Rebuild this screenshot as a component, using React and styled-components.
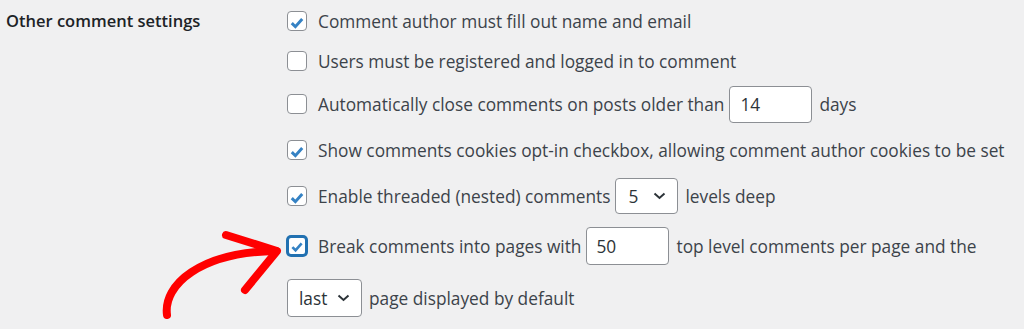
import styled, { createGlobalStyle } from "styled-components";

const GlobalStyle = createGlobalStyle`
  body {
    margin: 0;
    background: #f0f0f1;
    font-family: "Open Sans", "Noto Sans", sans-serif;
  }
`

const Page = styled.div`
  position: relative;
  display: flex;
  width: 1024px;
  height: 329px;
  overflow: hidden;
`

const Heading = styled.div`
  width: 287px;
  padding-left: 6px;
  box-sizing: border-box;
  font-size: 16.5px;
  font-weight: 600;
  color: #1d2327;
  line-height: 42px;
`

const Fieldset = styled.div`
  display: flex;
  flex-direction: column;
`

const Row = styled.div`
  display: flex;
  align-items: center;
  height: ${(props) => props.$h}px;
  font-size: 17.3px;
  color: #3c434a;
  white-space: nowrap;
`

const Box = styled.span`
  width: 20px;
  height: 20px;
  box-sizing: border-box;
  border: ${(props) => (props.$focus ? "2px solid #2271b1" : "1px solid #8c8f94")};
  box-shadow: ${(props) => (props.$focus ? "0 0 0 1px #2271b1" : "none")};
  border-radius: 4px;
  background: #fff;
  margin-right: 11px;
  flex-shrink: 0;
  display: flex;
  align-items: center;
  justify-content: center;
`

const Field = styled.span`
  display: inline-flex;
  align-items: center;
  justify-content: space-between;
  box-sizing: border-box;
  width: ${(props) => props.$w}px;
  height: ${(props) => props.$hh || 38}px;
  margin: 0 7px 0 5px;
  padding: 0 11px 0 ${(props) => props.$pl || 10}px;
  background: #fff;
  border: 1px solid #8c8f94;
  border-radius: 4px;
  color: #2c3338;
  font-size: 17.3px;
`

const FirstField = styled(Field)`
  margin-left: 0;
`

const Arrow = styled.svg`
  position: absolute;
  left: 0;
  top: 0;
  pointer-events: none;
`

const Check = ({ checked, focus }) => (
  <Box $focus={focus}>
    {checked && (
      <svg width="20" height="20" viewBox="0 0 20 20" style={{ marginTop: focus ? 1 : 3 }}>
        <polyline points="4.2,10.1 8.2,14.1 15.8,5.5" fill="none" stroke="#3582c4" strokeWidth="3.3" />
      </svg>
    )}
  </Box>
)

const Chevron = () => (
  <svg width="13" height="8" viewBox="0 0 13 8">
    <polyline points="1.5,1.5 6.5,6 11.5,1.5" fill="none" stroke="#2c3338" strokeWidth="2" />
  </svg>
)

const App = () => {
  return (
    <Page>
      <GlobalStyle />
      <Heading>Other comment settings</Heading>
      <Fieldset>
        <Row $h={42}>
          <Check checked />
          Comment author must fill out name and email
        </Row>
        <Row $h={38}>
          <Check />
          Users must be registered and logged in to comment
        </Row>
        <Row $h={48}>
          <Check />
          Automatically close comments on posts older than
          <Field $w={83} $hh={37}>14</Field>
          days
        </Row>
        <Row $h={44}>
          <Check checked />
          Show comments cookies opt-in checkbox, allowing comment author cookies to be set
        </Row>
        <Row $h={48}>
          <Check checked />
          Enable threaded (nested) comments
          <Field $w={63} $hh={36} $pl={12}>5<Chevron /></Field>
          levels deep
        </Row>
        <Row $h={52}>
          <Check checked focus />
          Break comments into pages with
          <Field $w={83} $pl={9}>50</Field>
          top level comments per page and the
        </Row>
        <Row $h={52}>
          <FirstField $w={75} $pl={11}>last<Chevron /></FirstField>
          page displayed by default
        </Row>
      </Fieldset>
      <Arrow width="1024" height="329">
        <g fill="none" stroke="#ff0000" strokeWidth="8" strokeLinecap="round" strokeLinejoin="round">
          <path d="M167 315 C 163 285, 200 252, 276 251" />
          <path d="M226 235 L 277 251 L 245 290" />
        </g>
      </Arrow>
    </Page>
  )
}

export default App
